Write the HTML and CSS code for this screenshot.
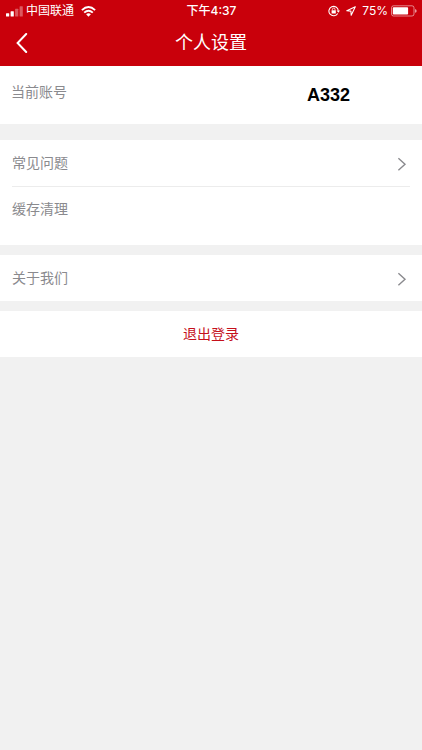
FILE: index.html
```html
<!DOCTYPE html>
<html lang="zh-CN">
<head>
  <meta charset="utf-8">
  <meta name="viewport" content="width=device-width, initial-scale=1">
  <title>个人设置</title>
  <link rel="stylesheet" href="styles.css">
</head>
<body>
  <header class="header">
    <div class="status">
      <div class="status-left">
        <svg width="17" height="11" viewBox="0 0 17 11" fill="#fff" aria-hidden="true">
          <rect x="0" y="7.3" width="3.2" height="3.2" rx=".5"/>
          <rect x="4.6" y="5.2" width="3.2" height="5.3" rx=".5"/>
          <rect x="9.1" y="2.8" width="3.2" height="7.7" rx=".5" opacity=".35"/>
          <rect x="13.6" y="0.3" width="3.2" height="10.2" rx=".5" opacity=".35"/>
        </svg>
        <span class="carrier">中国联通</span>
        <svg width="15" height="11" viewBox="0 0 15 11" fill="none" stroke="#fff" stroke-width="1.9" aria-hidden="true">
          <path d="M.9 4.1Q7.5-1.9 14.1 4.1"/>
          <path d="M3.2 6.6Q7.5 2.7 11.8 6.6"/>
          <path d="M7.5 10.7 5.1 8.3Q7.5 6.3 9.9 8.3Z" fill="#fff" stroke="none"/>
        </svg>
      </div>
      <span class="time">下午4:37</span>
      <div class="status-right">
        <svg width="12" height="12" viewBox="0 0 12 12" fill="none" stroke="#fff" aria-hidden="true">
          <path d="M9.7 8.4A4.7 4.7 0 1 1 10.3 5.6" stroke-width="1.1"/>
          <path d="M8.6 5.4H12L10.3 7.7Z" fill="#fff" stroke="none"/>
          <rect x="3.6" y="5.3" width="4.2" height="3.2" fill="#fff" stroke="none"/>
          <path d="M4.4 5.4V4.4a1.3 1.3 0 0 1 2.6 0v1" stroke-width=".8"/>
        </svg>
        <svg class="location" width="10" height="10" viewBox="0 0 10 10" fill="none" stroke="#fff" stroke-width="1.1" stroke-linejoin="round" aria-hidden="true">
          <path d="M9.3 .7 .8 4.8 4.9 5.1 5.2 9.2Z"/>
        </svg>
        <span>75%</span>
        <svg width="26" height="12" viewBox="0 0 26 12" aria-hidden="true">
          <rect x=".5" y=".8" width="22.5" height="10.2" rx="2" fill="none" stroke="#fff" stroke-opacity=".65" stroke-width=".8"/>
          <rect x="1.8" y="2.2" width="15.3" height="7.4" rx=".8" fill="#fff"/>
          <path d="M24 4q1.7 .5 1.7 1.9T24 7.8Z" fill="#fff" opacity=".6"/>
        </svg>
      </div>
    </div>
    <div class="nav">
      <button class="back" type="button" aria-label="返回">
        <svg width="12" height="20" viewBox="0 0 12 20" fill="none" stroke="#fff" stroke-width="2" stroke-linecap="round" aria-hidden="true">
          <path d="M10.2 1 1.6 10 10.2 19"/>
        </svg>
      </button>
      <h1 class="title">个人设置</h1>
    </div>
  </header>
  <main class="settings">
    <section class="account">
      <span class="account-label">当前账号</span>
      <strong class="account-name">A332</strong>
    </section>
    <section class="group group-common">
      <a class="row" href="#faq">
        <span>常见问题</span>
        <svg class="chevron" width="10" height="14" viewBox="0 0 10 14" fill="none" stroke="#8a8a8e" stroke-width="1.4" aria-hidden="true"><path d="M1.4 1.2 8 7.2 1.4 13.2"/></svg>
      </a>
      <a class="row" href="#cache"><span>缓存清理</span></a>
    </section>
    <section class="group">
      <a class="row" href="#about">
        <span>关于我们</span>
        <svg class="chevron" width="10" height="14" viewBox="0 0 10 14" fill="none" stroke="#8a8a8e" stroke-width="1.4" aria-hidden="true"><path d="M1.4 1.2 8 7.2 1.4 13.2"/></svg>
      </a>
    </section>
    <button class="logout" type="button">退出登录</button>
  </main>
</body>
</html>
```

FILE: styles.css
```css
* {
  box-sizing: border-box;
}

body {
  margin: 0;
  background: #f1f1f1;
  color: #8a8a8e;
  font: 14px/20px "Liberation Sans", "Noto Sans CJK SC", sans-serif;
}

.header {
  background: #c9000b;
  color: #fff;
}

.status {
  display: grid;
  grid-template-columns: 1fr auto 1fr;
  align-items: center;
  height: 20px;
  padding: 1px 5px 0 6px;
  font-family: Inter, "Noto Sans CJK SC", sans-serif;
  font-size: 12px;
}

.status-left,
.status-right {
  display: flex;
  align-items: center;
}

.status-right {
  justify-content: flex-end;
  gap: 3px;
}

.carrier {
  margin: 0 7px 0 3px;
}

.time {
  font-weight: 500;
}

.location {
  margin: 0 3px;
}

.nav {
  display: grid;
  grid-template-columns: 44px 1fr 44px;
  align-items: center;
  height: 46px;
}

.back {
  display: flex;
  align-items: center;
  height: 46px;
  padding: 0 16px;
  border: 0;
  background: none;
}

.back svg {
  flex: none;
}

.title {
  margin: 0;
  font-size: 18px;
  font-weight: 400;
  line-height: 26px;
  text-align: center;
}

.settings {
  display: flex;
  flex-direction: column;
  gap: 10px;
}

.account {
  display: flex;
  justify-content: space-between;
  margin-bottom: 6px;
  padding: 16px 72px 16px 11px;
  background: #fff;
}

.account-name {
  color: #000;
  font-size: 18px;
  line-height: 26px;
}

.group {
  padding: 0 12px;
  background: #fff;
}

.group-common {
  padding-bottom: 13px;
}

.row {
  display: flex;
  align-items: center;
  justify-content: space-between;
  height: 46px;
  padding-bottom: 1px;
  color: inherit;
  text-decoration: none;
}

.row + .row {
  border-top: 1px solid #ececec;
}

.chevron {
  margin: 3px 3px 0 0;
}

.logout {
  height: 46px;
  padding: 0 0 1px;
  border: 0;
  background: #fff;
  color: #c5101b;
  font: inherit;
}
```
